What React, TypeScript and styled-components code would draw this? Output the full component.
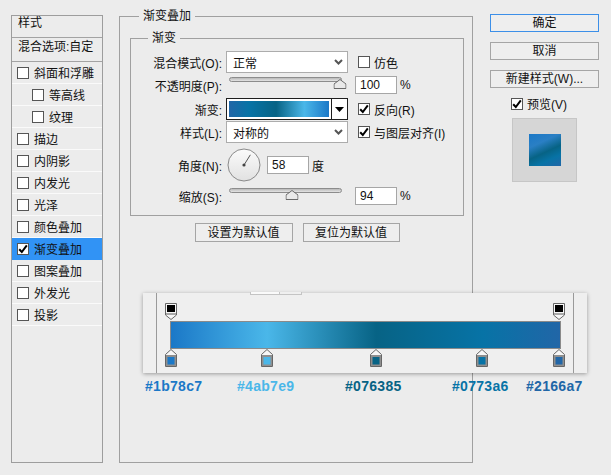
import React from 'react';
import styled, { createGlobalStyle } from 'styled-components';

const GlobalStyle = createGlobalStyle`
  html, body {
    margin: 0;
    padding: 0;
    background: #ececec;
  }
  body {
    font-family: "Liberation Sans", "Noto Sans CJK SC", sans-serif;
    font-size: 12px;
    color: #111;
  }
`;

const GRADIENT =
  'linear-gradient(90deg, #1b78c7 0%, #4ab7e9 24.7%, #076385 52.8%, #0773a6 80.2%, #2166a7 100%)';
const GRADIENT_REVERSED =
  'linear-gradient(90deg, #2166a7 0%, #0773a6 19.8%, #076385 47.2%, #4ab7e9 75.3%, #1b78c7 100%)';

const EFFECTS = [
  { name: '斜面和浮雕' },
  { name: '等高线', sub: true },
  { name: '纹理', sub: true },
  { name: '描边' },
  { name: '内阴影' },
  { name: '内发光' },
  { name: '光泽' },
  { name: '颜色叠加' },
  { name: '渐变叠加', on: true },
  { name: '图案叠加' },
  { name: '外发光' },
  { name: '投影' },
];

const COLOR_STOPS = [
  { at: 0, color: '#1b78c7', labelX: 2 },
  { at: 24.7, color: '#4ab7e9', labelX: 94 },
  { at: 52.8, color: '#076385', labelX: 202 },
  { at: 80.2, color: '#0773a6', labelX: 309 },
  { at: 100, color: '#2166a7', labelX: 383 },
];

const Dialog = styled.div`
  position: relative;
  width: 611px;
  height: 475px;
  box-sizing: border-box;
  padding-left: 11px;
  display: flex;
  align-items: flex-start;
  background: #ececec;
  overflow: hidden;
`;

/* ---------- left list ---------- */

const StyleList = styled.ul`
  list-style: none;
  margin: 15px 0 0;
  padding: 0;
  width: 92px;
  height: 448px;
  box-sizing: border-box;
  border: 1px solid #9d9d9d;
  flex: none;
`;

const ListHead = styled.li<{ $h: number; $pad: number }>`
  height: ${(p) => p.$h}px;
  box-sizing: border-box;
  padding: ${(p) => p.$pad}px 0 0 6px;
  line-height: 15px;
  border-bottom: 1px solid #a3a3a3;
`;

const ListItem = styled.li<{ $sub?: boolean; $active?: boolean }>`
  height: 21px;
  display: flex;
  align-items: center;
  gap: 5px;
  padding-left: ${(p) => (p.$sub ? 20 : 5)}px;
  border-bottom: 1px solid ${(p) => (p.$active ? '#3193f5' : '#fafafa')};
  background: ${(p) => (p.$active ? '#3193f5' : 'transparent')};
`;

const Box = styled.span`
  width: 12px;
  height: 12px;
  box-sizing: border-box;
  border: 1px solid #555;
  background: #fff;
  display: inline-flex;
  align-items: center;
  justify-content: center;
  flex: none;
`;

function CheckBox({ on }: { on?: boolean }) {
  return (
    <Box>
      {on && (
        <svg width="10" height="10" viewBox="0 0 10 10">
          <path d="M1.2 5.2 L3.8 8 L8.8 1.4" fill="none" stroke="#000" strokeWidth="2" />
        </svg>
      )}
    </Box>
  );
}

/* ---------- main group ---------- */

const Group = styled.fieldset`
  margin: 8px 0 0 16px;
  padding: 0 8px 0 10px;
  width: 354px;
  height: 455px;
  box-sizing: border-box;
  border: 1px solid #a0a0a0;
  min-width: 0;
  flex: none;
`;

const Legend = styled.legend<{ $indent: number }>`
  padding: 0 4px;
  margin-left: ${(p) => p.$indent}px;
  line-height: 16px;
  font-size: 12px;
`;

const Inner = styled.fieldset`
  margin: 6px 0 0;
  padding: 5px 0 0 0;
  width: 334px;
  height: 186px;
  box-sizing: border-box;
  border: 1px solid #a0a0a0;
  min-width: 0;
`;

const Row = styled.div<{ $h: number }>`
  height: ${(p) => p.$h}px;
  display: flex;
  align-items: center;
`;

const Label = styled.span`
  width: 91px;
  margin-right: 4px;
  text-align: right;
  white-space: nowrap;
  flex: none;
`;

const Select = styled.div`
  width: 122px;
  height: 22px;
  box-sizing: border-box;
  border: 1px solid #acacac;
  background: #fff;
  display: flex;
  align-items: center;
  justify-content: space-between;
  padding: 0 4px 0 6px;
  flex: none;
`;

const Extra = styled.label`
  margin-left: 10px;
  display: flex;
  align-items: center;
  gap: 4px;
  white-space: nowrap;
`;

const SliderBox = styled.div`
  width: 122px;
  height: 14px;
  margin-top: -6px;
  display: flex;
  align-items: flex-start;
  flex: none;
`;

const Track = styled.div`
  position: relative;
  width: 113px;
  height: 5px;
  margin: 2px 0 0 3px;
  box-sizing: border-box;
  border: 1px solid #8c8c8c;
  border-radius: 3px;
  background: linear-gradient(#b9b9b9, #e4e4e4);
`;

const Thumb = styled.svg`
  position: absolute;
  top: 1px;
  transform: translateX(-50%);
`;

const NumField = styled.div<{ $gap?: number }>`
  width: 42px;
  height: 18px;
  margin-left: ${(p) => p.$gap ?? 0}px;
  box-sizing: border-box;
  border: 1px solid #a6a6a6;
  background: #fff;
  padding-left: 4px;
  line-height: 16px;
  flex: none;
`;

const Unit = styled.span`
  margin-left: 3px;
`;

const GradientPick = styled.div`
  width: 122px;
  height: 22px;
  box-sizing: border-box;
  border: 1px solid #1e1e1e;
  background: #fff;
  display: flex;
  flex: none;
`;

const GradientSwatch = styled.div`
  flex: 1;
  margin: 2px;
  background: ${GRADIENT_REVERSED};
`;

const GradientArrow = styled.div`
  width: 15px;
  border-left: 1px solid #1e1e1e;
  display: flex;
  align-items: center;
  justify-content: center;
`;

const Dial = styled.svg`
  margin-left: 1px;
  flex: none;
`;

const ButtonRow = styled.div`
  margin-top: 7px;
  display: flex;
  justify-content: center;
  gap: 10px;
`;

const Button = styled.button<{ $w: number; $h?: number; $primary?: boolean }>`
  width: ${(p) => p.$w}px;
  height: ${(p) => p.$h ?? 19}px;
  padding: 0;
  box-sizing: border-box;
  border: 1px solid ${(p) => (p.$primary ? '#3c8fe8' : '#a5a5a5')};
  background: #eeeeee;
  font: inherit;
  color: #111;
  line-height: 16px;
`;

/* ---------- right column ---------- */

const Actions = styled.div`
  margin: 14px 0 0 17px;
  width: 109px;
  display: flex;
  flex-direction: column;
  align-items: center;
  gap: 10px;
  flex: none;
`;

const PreviewToggle = styled.label`
  align-self: flex-start;
  margin: -3px 0 0 21px;
  display: flex;
  align-items: center;
  gap: 4px;
`;

const PreviewBox = styled.div`
  width: 65px;
  height: 64px;
  margin-top: -4px;
  box-sizing: border-box;
  border: 1px solid #c6c6c6;
  background: #d6d6d6;
  display: flex;
  align-items: center;
  justify-content: center;
`;

const PreviewSwatch = styled.div`
  width: 32px;
  height: 32px;
  background: linear-gradient(155deg, #1b78c7 0%, #2a7fc4 30%, #076385 55%, #0773a6 75%, #2166a7 100%);
`;

/* ---------- gradient editor overlay ---------- */

const Editor = styled.div`
  position: absolute;
  left: 143px;
  top: 293px;
  width: 444px;
  height: 80px;
  box-sizing: border-box;
  padding: 0 13px;
  background: #efefef;
  box-shadow: 0 1px 4px rgba(0, 0, 0, 0.35);
`;

const EditorTab = styled.div`
  position: absolute;
  left: 107px;
  top: -1px;
  width: 52px;
  height: 3px;
  box-sizing: border-box;
  border: 1px solid #c4c4c4;
  border-top: none;
  background: linear-gradient(90deg, #fafafa 0 28px, #c4c4c4 28px 29px, #efefef 29px);
`;

const Rail = styled.div`
  height: 100%;
  box-sizing: border-box;
  border-left: 1px solid #9a9a9a;
  border-right: 1px solid #9a9a9a;
  padding-top: 28px;
`;

const BarWrap = styled.div`
  position: relative;
  width: 391px;
  margin-left: 13px;
`;

const Bar = styled.div`
  height: 28px;
  box-sizing: border-box;
  border: 1px solid #8a8a8a;
  background: ${GRADIENT};
`;

const Stop = styled.svg<{ $top: number }>`
  position: absolute;
  top: ${(p) => p.$top}px;
  transform: translateX(-50%);
`;

const HexLabel = styled.span<{ $color: string }>`
  position: absolute;
  top: 85px;
  font-family: "Liberation Sans", "DejaVu Sans", sans-serif;
  font-weight: bold;
  font-size: 14px;
  letter-spacing: 0.3px;
  color: ${(p) => p.$color};
  white-space: nowrap;
`;

function OpacityStop({ left }: { left: number }) {
  return (
    <Stop $top={-18} width="12" height="17" viewBox="0 0 12 17" style={{ left }}>
      <path d="M0.5 0.5H11.5V12L6 16.5L0.5 12Z" fill="#f7f7f7" stroke="#666" />
      <rect x="2" y="2" width="8" height="7" fill="#000" />
      <rect x="1" y="10" width="10" height="2" fill="#a9a9a9" />
    </Stop>
  );
}

function ColorStop({ left, color }: { left: number; color: string }) {
  return (
    <Stop $top={28} width="12" height="18" viewBox="0 0 12 18" style={{ left }}>
      <path d="M6 0.5L11.5 5.5V17.5H0.5V5.5Z" fill="#f7f7f7" stroke="#666" />
      <rect x="1" y="6" width="10" height="11" fill="#8f8f8f" />
      <rect x="2.5" y="8" width="7" height="7.5" fill={color} />
    </Stop>
  );
}

function Chevron() {
  return (
    <svg width="9" height="6" viewBox="0 0 9 6">
      <path d="M1 1L4.5 4.5L8 1" fill="none" stroke="#555" strokeWidth="2" />
    </svg>
  );
}

function Slider({ pos }: { pos: number }) {
  return (
    <SliderBox>
      <Track>
        <Thumb width="13" height="10" viewBox="0 0 13 10" style={{ left: `${pos}%` }}>
          <path d="M6.5 0.5L12.5 5V9.5H0.5V5Z" fill="#e9e9e9" stroke="#6a6a6a" />
        </Thumb>
      </Track>
    </SliderBox>
  );
}

export default function App() {
  const angle = 58;
  const rad = (angle * Math.PI) / 180;
  const barInner = 388;

  return (
    <>
      <GlobalStyle />
      <Dialog>
        <StyleList>
          <ListHead $h={22} $pad={0}>样式</ListHead>
          <ListHead $h={24} $pad={2}>混合选项:自定</ListHead>
          {EFFECTS.map((e) => (
            <ListItem key={e.name} $sub={e.sub} $active={e.on}>
              <CheckBox on={e.on} />
              <span>{e.name}</span>
            </ListItem>
          ))}
        </StyleList>

        <Group>
          <Legend $indent={9}>渐变叠加</Legend>
          <Inner>
            <Legend $indent={17}>渐变</Legend>
            <Row $h={22}>
              <Label>混合模式(O):</Label>
              <Select>
                <span>正常</span>
                <Chevron />
              </Select>
              <Extra>
                <CheckBox />
                仿色
              </Extra>
            </Row>
            <Row $h={24}>
              <Label>不透明度(P):</Label>
              <Slider pos={99} />
              <NumField $gap={7}>100</NumField>
              <Unit>%</Unit>
            </Row>
            <Row $h={24}>
              <Label>渐变:</Label>
              <GradientPick>
                <GradientSwatch />
                <GradientArrow>
                  <svg width="9" height="5" viewBox="0 0 9 5">
                    <path d="M0 0H9L4.5 5Z" fill="#000" />
                  </svg>
                </GradientArrow>
              </GradientPick>
              <Extra>
                <CheckBox on />
                反向(R)
              </Extra>
            </Row>
            <Row $h={22}>
              <Label>样式(L):</Label>
              <Select>
                <span>对称的</span>
                <Chevron />
              </Select>
              <Extra>
                <CheckBox on />
                与图层对齐(I)
              </Extra>
            </Row>
            <Row $h={44}>
              <Label>角度(N):</Label>
              <Dial width="34" height="34" viewBox="0 0 34 34">
                <defs>
                  <linearGradient id="dialFill" x1="0" y1="0" x2="0" y2="1">
                    <stop offset="0" stopColor="#fbfbfb" />
                    <stop offset="1" stopColor="#e1e1e1" />
                  </linearGradient>
                </defs>
                <circle cx="17" cy="17" r="16" fill="url(#dialFill)" stroke="#8a8a8a" />
                <line
                  x1="17"
                  y1="17"
                  x2={17 + 12 * Math.cos(rad)}
                  y2={17 - 12 * Math.sin(rad)}
                  stroke="#555"
                  strokeWidth="1"
                />
                <circle cx="17" cy="17" r="1.6" fill="#444" />
              </Dial>
              <NumField $gap={6}>58</NumField>
              <Unit>度</Unit>
            </Row>
            <Row $h={18}>
              <Label>缩放(S):</Label>
              <Slider pos={56} />
              <NumField $gap={7}>94</NumField>
              <Unit>%</Unit>
            </Row>
          </Inner>
          <ButtonRow>
            <Button $w={98}>设置为默认值</Button>
            <Button $w={97}>复位为默认值</Button>
          </ButtonRow>
        </Group>

        <Actions>
          <Button $w={109} $h={18} $primary>确定</Button>
          <Button $w={109} $h={18}>取消</Button>
          <Button $w={109} $h={18}>新建样式(W)...</Button>
          <PreviewToggle>
            <CheckBox on />
            预览(V)
          </PreviewToggle>
          <PreviewBox>
            <PreviewSwatch />
          </PreviewBox>
        </Actions>

        <Editor>
          <EditorTab />
          <Rail>
            <BarWrap>
              <Bar />
              <OpacityStop left={1 + 0} />
              <OpacityStop left={1 + barInner} />
              {COLOR_STOPS.map((s) => (
                <ColorStop key={s.color} left={1 + (s.at / 100) * barInner} color={s.color} />
              ))}
            </BarWrap>
          </Rail>
          {COLOR_STOPS.map((s) => (
            <HexLabel key={s.color} $color={s.color} style={{ left: s.labelX }}>
              {s.color}
            </HexLabel>
          ))}
        </Editor>
      </Dialog>
    </>
  );
}
